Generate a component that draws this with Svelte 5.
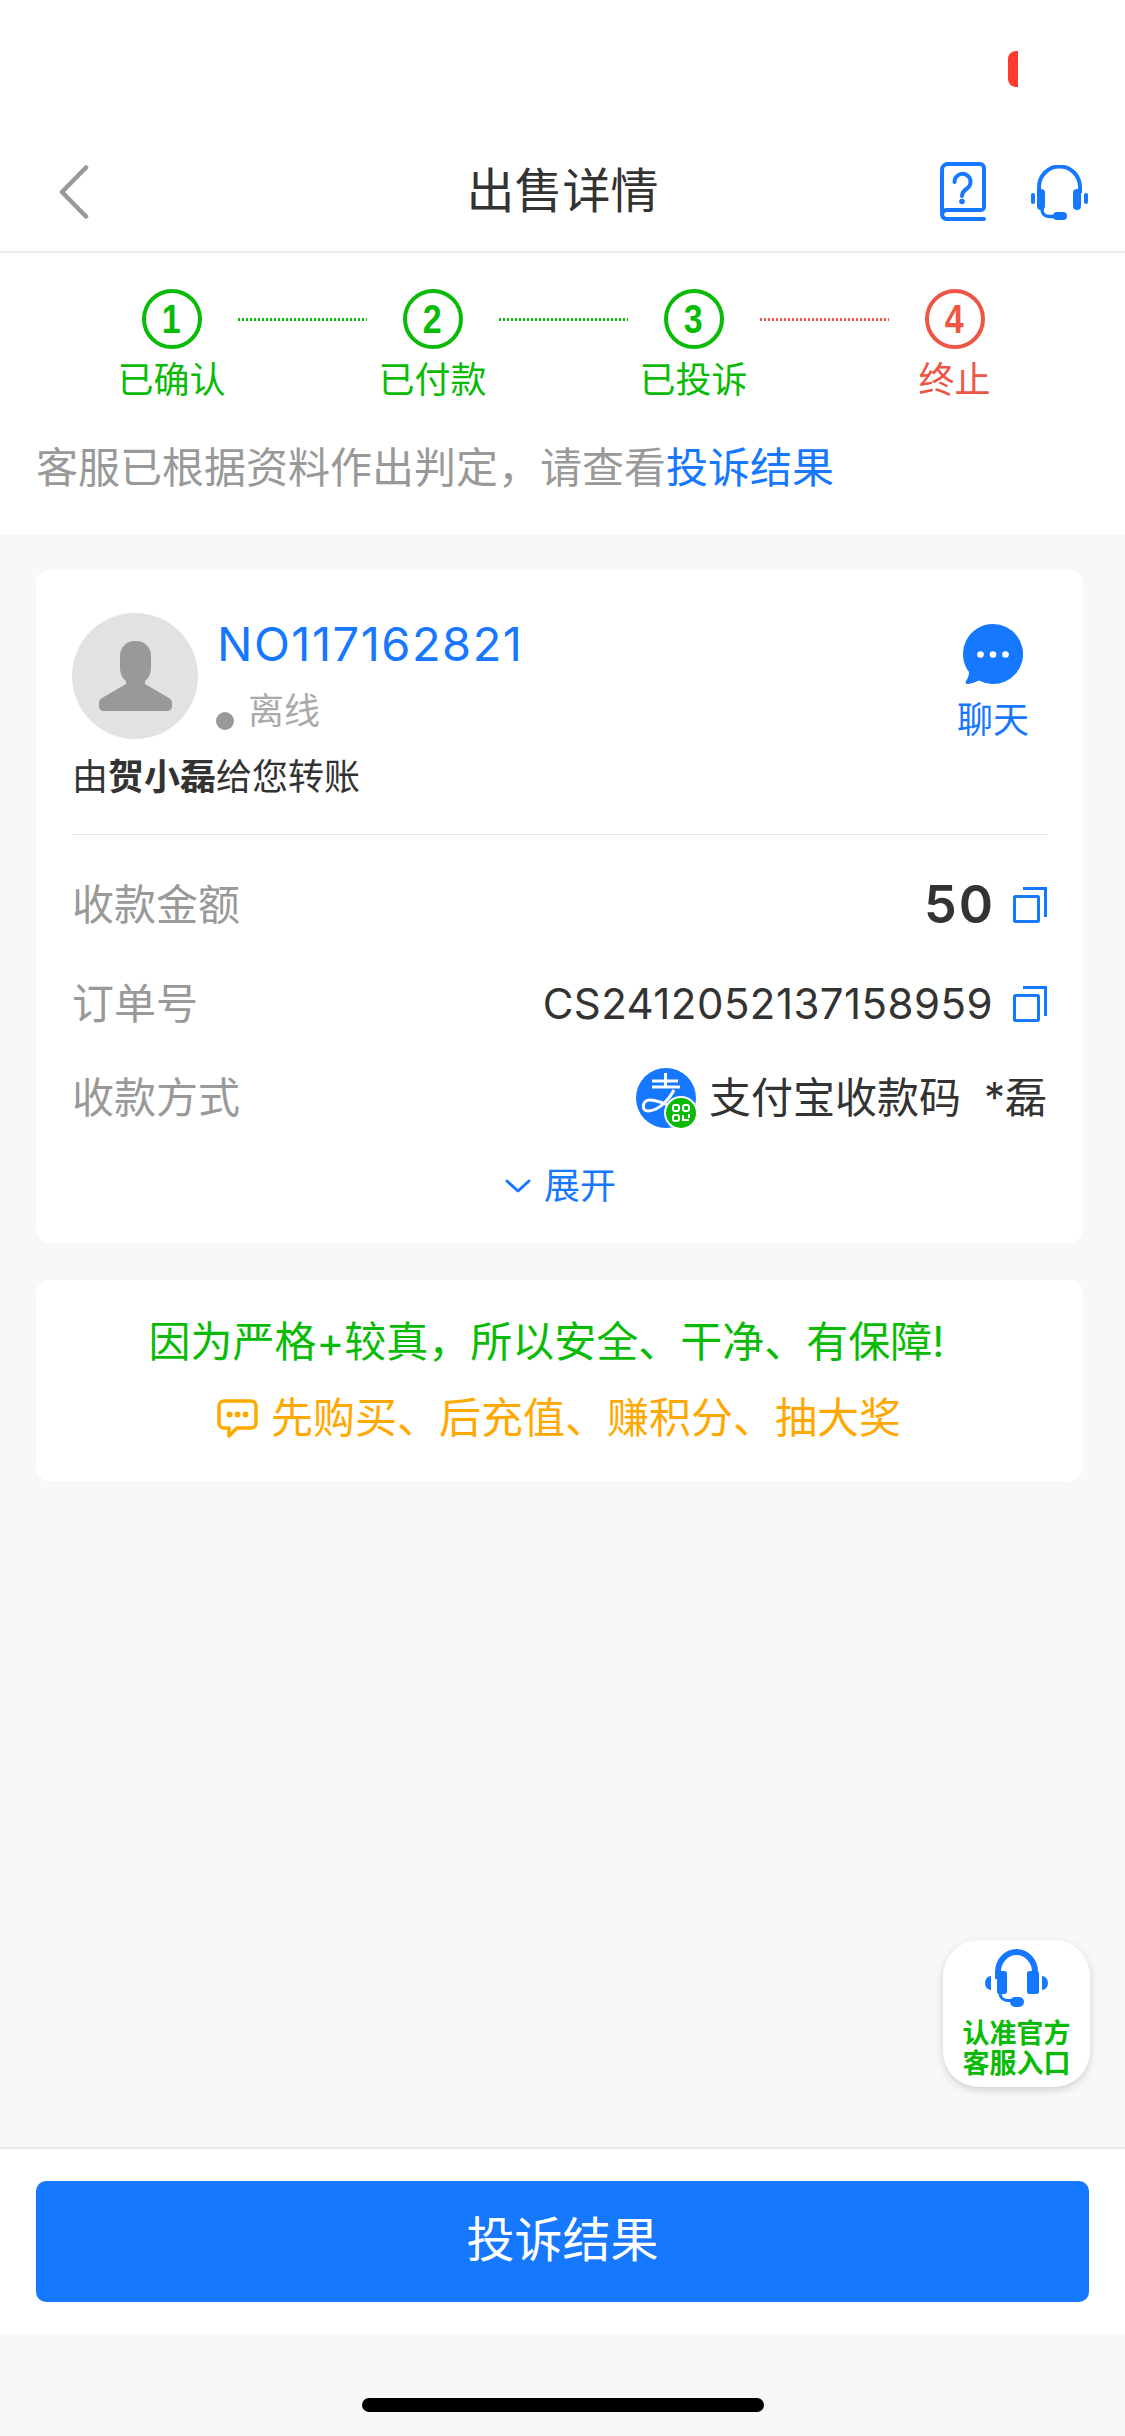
<script>
  const steps = [
    { n: 1, label: '已确认', line: 'green' },
    { n: 2, label: '已付款', line: 'green' },
    { n: 3, label: '已投诉', line: 'red' },
    { n: 4, label: '终止', line: '', red: true }
  ];
</script>

{#snippet copyIcon()}
  <svg class="copy" viewBox="0 0 34 36" fill="none" stroke="#1677ff" stroke-width="3">
    <rect x="1.5" y="9.5" width="24" height="25" rx="1" />
    <path d="M10 1.5H32.5V30" />
  </svg>
{/snippet}

<div class="page">
  <div class="status"><span class="sliver"></span></div>

  <header class="nav">
    <svg class="back" viewBox="0 0 30 54" fill="none" stroke="#999" stroke-width="4.5" stroke-linecap="round" stroke-linejoin="round">
      <path d="M27 2.5 3 27l24 24.500" />
    </svg>
    <h1>出售详情</h1>
    <div class="nav-icons">
      <svg class="book" viewBox="0 0 46 60" fill="none" stroke="#1677ff" stroke-width="4" stroke-linecap="round" stroke-linejoin="round">
        <path d="M2 51V8a6 6 0 0 1 6-6h32a4 4 0 0 1 4 4v39a3 3 0 0 1-3 3H8a5 5 0 0 0-6 4.500 5 5 0 0 0 6 4.500h36" />
        <path d="M14.500 20a8 8 0 1 1 12.500 6.500c-3 2-5 3.500-5 7.500" />
        <circle cx="22" cy="39.500" r="2.800" fill="#1677ff" stroke="none" />
      </svg>
      <svg class="headset" viewBox="0 0 57 55" fill="none">
        <path d="M8 28V22a19.500 19.500 0 0 1 41 0v6" stroke="#1677ff" stroke-width="4" />
        <rect x="6" y="24" width="8" height="21" rx="4" fill="#1677ff" />
        <rect x="42" y="24" width="8" height="21" rx="4" fill="#1677ff" />
        <rect x="0" y="28" width="4" height="11" rx="2" fill="#1677ff" />
        <rect x="53" y="28" width="4" height="11" rx="2" fill="#1677ff" />
        <path d="M11 44c0 5 3 7.500 7 7.500h6" stroke="#1677ff" stroke-width="3.500" />
        <rect x="22" y="47" width="14" height="8" rx="4" fill="#1677ff" />
      </svg>
    </div>
  </header>

  <section class="progress">
    <ol class="steps">
      {#each steps as s}
        <li class="step" class:red={s.red}>
          <span class="circle"><span class="digit">{s.n}</span></span>
          <span class="label">{s.label}</span>
          {#if s.line}<i class="connector {s.line}"></i>{/if}
        </li>
      {/each}
    </ol>
    <p class="notice">客服已根据资料作出判定，请查看<span class="blue">投诉结果</span></p>
  </section>

  <section class="card info">
    <div class="user">
      <div class="avatar">
        <svg viewBox="0 0 126 126">
          <path fill="#999" d="M63.500 28c-9 0-15.500 6-15.500 15v12c0 5 2 10 6 13v3L30 85c-2 1-3 3-3 5v3c0 3 2 5 5 5h63c3 0 5-2 5-5v-3c0-2-1-4-3-5L73 71v-3c4-3 6-8 6-13V43c0-9-6.500-15-15.500-15z" />
        </svg>
      </div>
      <div class="who">
        <div class="no">NO117162821</div>
        <div class="state"><i class="dot"></i><span>离线</span></div>
      </div>
      <div class="chat">
        <svg viewBox="0 0 60 62">
          <path fill="#1677ff" d="M30 0a30 30 0 1 1-14 56.500c-3 1.500-8 3-11 3.500-2 .3-3-1.500-2-3 1.500-2 3-5 3-9A30 30 0 0 1 30 0z" />
          <circle cx="17.500" cy="30.500" r="3.300" fill="#fff" />
          <circle cx="30" cy="30.500" r="3.300" fill="#fff" />
          <circle cx="42.500" cy="30.500" r="3.300" fill="#fff" />
        </svg>
        <span>聊天</span>
      </div>
    </div>
    <p class="from">由<b>贺小磊</b>给您转账</p>

    <dl class="rows">
      <div class="row amount">
        <dt>收款金额</dt>
        <dd><strong>50</strong>{@render copyIcon()}</dd>
      </div>
      <div class="row order">
        <dt>订单号</dt>
        <dd><span class="num">CS2412052137158959</span>{@render copyIcon()}</dd>
      </div>
      <div class="row method">
        <dt>收款方式</dt>
        <dd>
          <svg class="alipay" viewBox="0 0 60 60" fill="none">
            <circle cx="30" cy="30" r="30" fill="#1677ff" />
            <path d="M16 13H42M29.500 5V18M16 19H44M38 22C30 37 19 43 12 43 5 43 6 32 14 32 24 32 34 38 48 44" stroke="#fff" stroke-width="3" />
            <circle cx="45" cy="45" r="17" fill="#fff" />
            <circle cx="45" cy="45" r="15" fill="#09bb07" />
            <g stroke="#fff" stroke-width="2">
              <rect x="37" y="37" width="6" height="6" rx="2" />
              <rect x="47" y="37" width="6" height="6" rx="2" />
              <rect x="37" y="47" width="6" height="6" rx="2" />
              <path d="M47 47v5h6M53 46v4" />
            </g>
          </svg>
          <span class="pay">支付宝收款码</span>
          <span class="payee">*磊</span>
        </dd>
      </div>
    </dl>

    <div class="expand">
      <svg viewBox="0 0 26 14" fill="none" stroke="#1677ff" stroke-width="3" stroke-linecap="round" stroke-linejoin="round">
        <path d="M2 2l11 10L24 2" />
      </svg>
      <span>展开</span>
    </div>
  </section>

  <section class="card promo">
    <p class="slogan">因为严格+较真，所以安全、干净、有保障!</p>
    <p class="tip">
      <svg viewBox="0 0 41 39" fill="none">
        <path d="M7 2h27a5 5 0 0 1 5 5v17a5 5 0 0 1-5 5H20l-8 8v-8H7a5 5 0 0 1-5-5V7a5 5 0 0 1 5-5z" stroke="#ffa800" stroke-width="3.500" stroke-linejoin="round" />
        <circle cx="12.500" cy="15.500" r="3" fill="#ffa800" />
        <circle cx="20.500" cy="15.500" r="3" fill="#ffa800" />
        <circle cx="28.500" cy="15.500" r="3" fill="#ffa800" />
      </svg>
      <span>先购买、后充值、赚积分、抽大奖</span>
    </p>
  </section>

  <aside class="service">
    <svg viewBox="0 0 63 59" fill="none">
      <path d="M13 30V23a18.500 20 0 0 1 37 0v7" stroke="#1677ff" stroke-width="6" />
      <rect x="12" y="22" width="10" height="23" rx="2.500" fill="#1677ff" />
      <rect x="42" y="22" width="12" height="23" rx="2.500" fill="#1677ff" />
      <path d="M0 34a6 7 0 0 1 6-7v14a6 7 0 0 1-6-7z" fill="#1677ff" />
      <path d="M63 34a6 7 0 0 0-6-7v14a6 7 0 0 0 6-7z" fill="#1677ff" />
      <path d="M15 44c0 5 4 7.500 8 7.500h6" stroke="#1677ff" stroke-width="3" />
      <rect x="25" y="48" width="14" height="10" rx="5" fill="#1677ff" />
    </svg>
    <span>认准官方<br />客服入口</span>
  </aside>

  <footer class="footer">
    <button class="cta">投诉结果</button>
  </footer>

  <div class="home"><span></span></div>
</div>

<style>
  :global(body) {
    margin: 0;
    background: #f8f8f8;
  }
  .page {
    position: relative;
    width: 1125px;
    height: 2436px;
    display: flex;
    flex-direction: column;
    background: #f8f8f8;
    overflow: hidden;
    color: #333;
    font-family: Inter, "Noto Sans CJK SC", sans-serif;
  }
  p, h1, dl, dd, ol { margin: 0; padding: 0; }
  svg { display: block; flex: none; }

  .status {
    position: relative;
    height: 130px;
    background: #fff;
  }
  .sliver {
    position: absolute;
    left: 1008px;
    top: 51px;
    width: 10px;
    height: 36px;
    border-radius: 8px 0 0 8px;
    background: #ff3b30;
  }

  .nav {
    position: relative;
    height: 123px;
    box-sizing: border-box;
    display: flex;
    align-items: center;
    justify-content: center;
    background: #fff;
    border-bottom: 2px solid #ececec;
  }
  .nav h1 {
    font-size: 48px;
    font-weight: 400;
    line-height: 64px;
    color: #333;
  }
  .back {
    position: absolute;
    left: 59px;
    top: 35px;
    width: 30px;
    height: 54px;
  }
  .nav-icons {
    position: absolute;
    left: 940px;
    top: 32px;
    display: flex;
    gap: 45px;
    align-items: center;
  }
  .book { width: 46px; height: 60px; }
  .headset { width: 57px; height: 55px; }

  .progress {
    height: 282px;
    box-sizing: border-box;
    padding-top: 36px;
    background: #fff;
  }
  .steps {
    list-style: none;
    display: grid;
    grid-template-columns: repeat(4, 261px);
    padding-left: 41px;
  }
  .step {
    position: relative;
    display: flex;
    flex-direction: column;
    align-items: center;
    color: #09bb07;
  }
  .step.red { color: #ee5544; }
  .circle {
    width: 60px;
    height: 60px;
    box-sizing: border-box;
    border: 4px solid currentColor;
    border-radius: 50%;
    display: flex;
    align-items: center;
    justify-content: center;
    font-family: "Liberation Sans", sans-serif;
    font-size: 40px;
    font-weight: 700;
    line-height: 1;
  }
  .digit { display: block; transform: scaleX(0.85); }
  .label {
    margin-top: 7px;
    font-size: 36px;
    line-height: 48px;
  }
  .connector {
    position: absolute;
    left: calc(50% + 66px);
    top: 29px;
    width: 129px;
    height: 3px;
  }
  .connector.green {
    background: repeating-linear-gradient(90deg, #09bb07 0 2.500px, transparent 2.500px 4px);
  }
  .connector.red {
    background: repeating-linear-gradient(90deg, #ee5544 0 2.500px, transparent 2.500px 4px);
  }
  .notice {
    margin: 36px 0 0 36px;
    font-size: 42px;
    line-height: 56px;
    color: #999;
  }
  .blue { color: #1677ff; }

  .card {
    margin-left: 36px;
    width: 1047px;
    box-sizing: border-box;
    background: #fff;
    border-radius: 14px;
  }
  .info {
    margin-top: 35px;
    height: 673px;
    padding: 43px 36px 0;
  }
  .user {
    display: flex;
    align-items: flex-start;
    height: 126px;
  }
  .avatar {
    width: 126px;
    height: 126px;
    border-radius: 50%;
    background: #e2e2e2;
    flex: none;
  }
  .who {
    margin-left: 18px;
    flex: 1;
    margin-top: -1px;
  }
  .no {
    margin-left: 1px;
    font-family: Inter, sans-serif;
    font-size: 47px;
    line-height: 64px;
    letter-spacing: 1.500px;
    color: #1677ff;
  }
  .state {
    display: flex;
    align-items: flex-end;
    margin-top: 11px;
    height: 48px;
    color: #aaa;
    font-size: 36px;
    line-height: 48px;
  }
  .dot {
    width: 18px;
    height: 18px;
    border-radius: 50%;
    background: #999;
    margin: 0 14px 5px 0;
  }
  .chat {
    margin-top: 11px;
    margin-right: 18px;
    width: 72px;
    display: flex;
    flex-direction: column;
    align-items: center;
    color: #1677ff;
    font-size: 36px;
    line-height: 48px;
  }
  .chat svg { width: 60px; height: 62px; margin-bottom: 10px; }
  .from {
    margin: 13px 0 0 0;
    font-size: 36px;
    line-height: 50px;
    color: #333;
  }
  .from b { font-weight: 700; }

  .rows {
    margin-top: 32px;
    border-top: 1px solid #e6e6e6;
  }
  .row {
    display: flex;
    align-items: center;
    justify-content: space-between;
  }
  .row dt {
    font-size: 42px;
    line-height: 56px;
    color: #999;
  }
  .row dd {
    display: flex;
    align-items: center;
    font-size: 42px;
    line-height: 56px;
  }
  .amount { margin-top: 42px; height: 56px; }
  .order { margin-top: 43px; height: 56px; }
  .method { margin-top: 36px; height: 60px; }
  .copy { width: 34px; height: 36px; margin-left: 20px; }
  strong {
    font-family: Inter, sans-serif;
    font-size: 52px;
    font-weight: 600;
    letter-spacing: 2px;
    margin-right: -2px;
  }
  .num {
    font-family: Inter, sans-serif;
    letter-spacing: 0.450px;
  }
  .alipay { width: 60px; height: 60px; }
  .pay { margin-left: 13px; }
  .payee { margin-left: 23px; }

  .expand {
    margin-top: 34px;
    display: flex;
    align-items: center;
    justify-content: center;
    gap: 13px;
    color: #1677ff;
    font-size: 36px;
    line-height: 48px;
    margin-left: 2px;
  }
  .expand svg { width: 26px; height: 14px; }

  .promo {
    margin-top: 37px;
    height: 201px;
    padding-top: 34px;
    text-align: center;
    font-size: 42px;
    line-height: 56px;
  }
  .slogan { color: #09bb07; margin-left: -26px; }
  .tip {
    margin-top: 20px;
    display: flex;
    justify-content: center;
    align-items: center;
    gap: 13px;
    color: #ffa800;
    margin-left: -1px;
  }
  .tip svg { width: 41px; height: 39px; }

  .service {
    position: absolute;
    left: 943px;
    top: 1940px;
    width: 147px;
    height: 147px;
    box-sizing: border-box;
    padding-top: 9px;
    border-radius: 36px;
    background: #fff;
    box-shadow: 0 3px 9px rgba(0, 0, 0, 0.16);
    display: flex;
    flex-direction: column;
    align-items: center;
    color: #09bb07;
    font-size: 27px;
    font-weight: 700;
    line-height: 30px;
    text-align: center;
  }
  .service svg { width: 63px; height: 59px; margin-bottom: 11px; }

  .footer {
    position: absolute;
    left: 0;
    right: 0;
    top: 2147px;
    height: 187px;
    box-sizing: border-box;
    padding: 32px 36px 0;
    background: #fff;
    border-top: 2px solid #ececec;
  }
  .cta {
    display: block;
    width: 1053px;
    height: 121px;
    border: 0;
    border-radius: 10px;
    padding: 0 0 12px;
    background: #1677ff;
    color: #fff;
    font: inherit;
    font-size: 48px;
  }
  .home {
    position: absolute;
    left: 362px;
    top: 2398px;
  }
  .home span {
    display: block;
    width: 402px;
    height: 14px;
    border-radius: 7px;
    background: #000;
  }
</style>
